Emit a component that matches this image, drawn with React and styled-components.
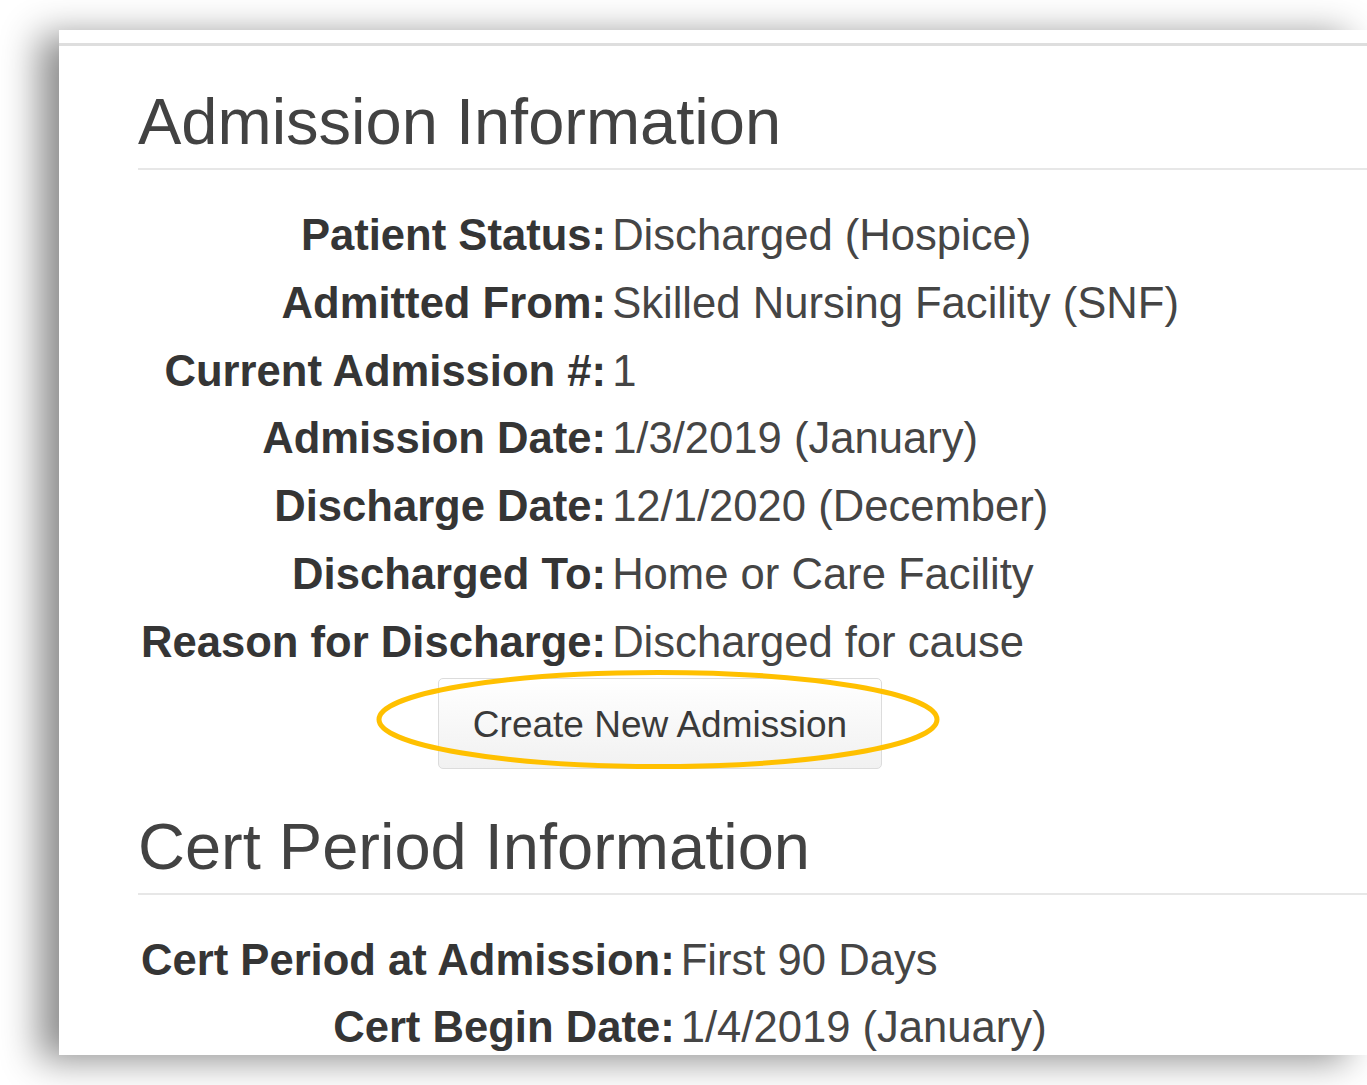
import React from "react";
import styled, { createGlobalStyle } from "styled-components";

const GlobalStyle = createGlobalStyle`
    html, body {
        margin: 0;
        background: #ffffff;
        overflow: hidden;
    }
    body {
        font-family: "Liberation Sans", Arial, sans-serif;
        color: #444;
    }
`;

const admission = [
    { label: "Patient Status:", value: "Discharged (Hospice)" },
    { label: "Admitted From:", value: "Skilled Nursing Facility (SNF)" },
    { label: "Current Admission #:", value: "1" },
    { label: "Admission Date:", value: "1/3/2019 (January)" },
    { label: "Discharge Date:", value: "12/1/2020 (December)" },
    { label: "Discharged To:", value: "Home or Care Facility" },
    { label: "Reason for Discharge:", value: "Discharged for cause" }
];

const certPeriod = [
    { label: "Cert Period at Admission:", value: "First 90 Days" },
    { label: "Cert Begin Date:", value: "1/4/2019 (January)" }
];

const Stage = styled.div`
    box-sizing: border-box;
    height: 1085px;
    padding: 30px 0 30px 59px;
`;

const Panel = styled.div`
    width: 1308px;
    height: 1025px;
    background: #fff;
    overflow: hidden;
    box-shadow: -20px 5px 35px rgba(0, 0, 0, 0.45);
`;

const TopRule = styled.div`
    height: 3px;
    margin-top: 13px;
    background: #dedede;
`;

const Content = styled.div`
    padding-left: 79px;
`;

const SectionTitle = styled.h1`
    margin: ${(p) => (p.$first ? "40px" : "42px")} 0 0;
    padding-bottom: 10px;
    border-bottom: 2px solid #e7e7e7;
    font-size: 65px;
    line-height: 72px;
    font-weight: 400;
    color: #424242;
    white-space: nowrap;
`;

const FieldGrid = styled.div`
    display: grid;
    grid-template-columns: auto auto;
    justify-content: start;
    column-gap: 6px;
    margin-top: 32px;
    padding-left: 3px;
    font-size: 43.6px;
    line-height: 67.8px;
`;

const Label = styled.div`
    text-align: right;
    font-weight: 700;
    color: #353535;
    white-space: nowrap;
`;

const Value = styled.div`
    color: #454545;
    white-space: nowrap;
`;

const ButtonRow = styled.div`
    grid-column: 1 / -1;
    justify-self: center;
    position: relative;
    margin-top: 1px;
`;

const Button = styled.button`
    box-sizing: border-box;
    height: 91px;
    padding: 4px 34px 0;
    border: 1.5px solid #dcdcdc;
    border-radius: 5px;
    background: linear-gradient(#ffffff, #f1f1f1);
    font-family: "Liberation Sans", Arial, sans-serif;
    font-size: 37px;
    color: #3a3a3a;
    cursor: pointer;
`;

const Highlight = styled.svg`
    position: absolute;
    left: -64px;
    top: -10px;
    width: 568px;
    height: 103px;
    pointer-events: none;
    overflow: visible;
`;

function Fields({ rows, children }) {
    return (
        <FieldGrid>
            {rows.map((row, i) => (
                <React.Fragment key={i}>
                    <Label>{row.label}</Label>
                    <Value>{row.value}</Value>
                </React.Fragment>
            ))}
            {children}
        </FieldGrid>
    );
}

export default function App() {
    return (
        <>
            <GlobalStyle />
            <Stage>
                <Panel>
                    <TopRule />
                    <Content>
                        <SectionTitle $first>Admission Information</SectionTitle>
                        <Fields rows={admission}>
                            <ButtonRow>
                                <Button type="button">Create New Admission</Button>
                                <Highlight viewBox="0 0 568 103">
                                    <ellipse
                                        cx="284"
                                        cy="51.5"
                                        rx="279"
                                        ry="47"
                                        fill="none"
                                        stroke="#ffc000"
                                        strokeWidth="5"
                                    />
                                </Highlight>
                            </ButtonRow>
                        </Fields>
                        <SectionTitle>Cert Period Information</SectionTitle>
                        <Fields rows={certPeriod} />
                    </Content>
                </Panel>
            </Stage>
        </>
    );
}
